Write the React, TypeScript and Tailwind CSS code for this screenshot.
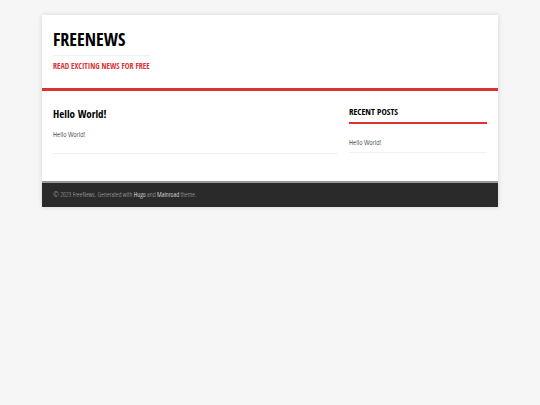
function SiteHeader() {
  return (
    <header className="border-b-3 border-[#dc3236] px-[11px] pt-3 pb-4 font-['Open_Sans_Condensed','Open_Sans',sans-serif]">
      <a href="/" className="inline-block align-top">
        <h1 className="border-b border-[#f0f0f0] pb-1 text-[18px] leading-[24px] font-bold uppercase">
          FreeNews
        </h1>
        <p className="pt-1 text-[8px] leading-[12px] font-bold text-[#dc3236] uppercase">
          Read exciting news for free
        </p>
      </a>
    </header>
  );
}

function PostList() {
  return (
    <main className="min-w-0 flex-1">
      <article className="border-b border-[#f0f0f0] pb-[11px]">
        <h2 className="font-['Open_Sans_Condensed','Open_Sans',sans-serif] text-[11px] leading-[14px] font-bold">
          <a href="#hello-world">Hello World!</a>
        </h2>
        <p className="mt-[5px] text-[8px] leading-[16px]">Hello World!</p>
      </article>
    </main>
  );
}

function Sidebar() {
  return (
    <aside className="w-[138px] shrink-0">
      <h4 className="border-b-2 border-[#dc3236] pb-[5px] font-['Open_Sans_Condensed','Open_Sans',sans-serif] text-[9px] leading-[10px] font-bold uppercase">
        Recent posts
      </h4>
      <ul className="mt-3">
        <li className="border-b border-[#f0f0f0] pb-1 text-[8px] leading-[12px]">
          <a href="#hello-world" className="block">
            Hello World!
          </a>
        </li>
      </ul>
    </aside>
  );
}

function App() {
  return (
    <div className="min-h-screen bg-[#f6f6f6] px-[42px] pt-[15px] font-['Open_Sans_Condensed_Light','Noto_Sans_Condensed','Open_Sans',sans-serif] text-black">
      <div className="bg-white shadow-[0_0_5px_rgba(0,0,0,0.15)]">
        <SiteHeader />
        <div className="flex gap-[11px] px-[11px] pt-4 pb-[27px]">
          <PostList />
          <Sidebar />
        </div>
        <footer className="border-t-2 border-[#999] bg-[#2a2a2a] px-[11px] py-[6px] text-[7px] leading-[12px] text-[#b0b0b0]">
          © 2023 FreeNews. Generated with{' '}
          <a href="#hugo" className="text-white">
            Hugo
          </a>{' '}
          and{' '}
          <a href="#mainroad" className="text-white">
            Mainroad
          </a>{' '}
          theme.
        </footer>
      </div>
    </div>
  );
}

export default App;
